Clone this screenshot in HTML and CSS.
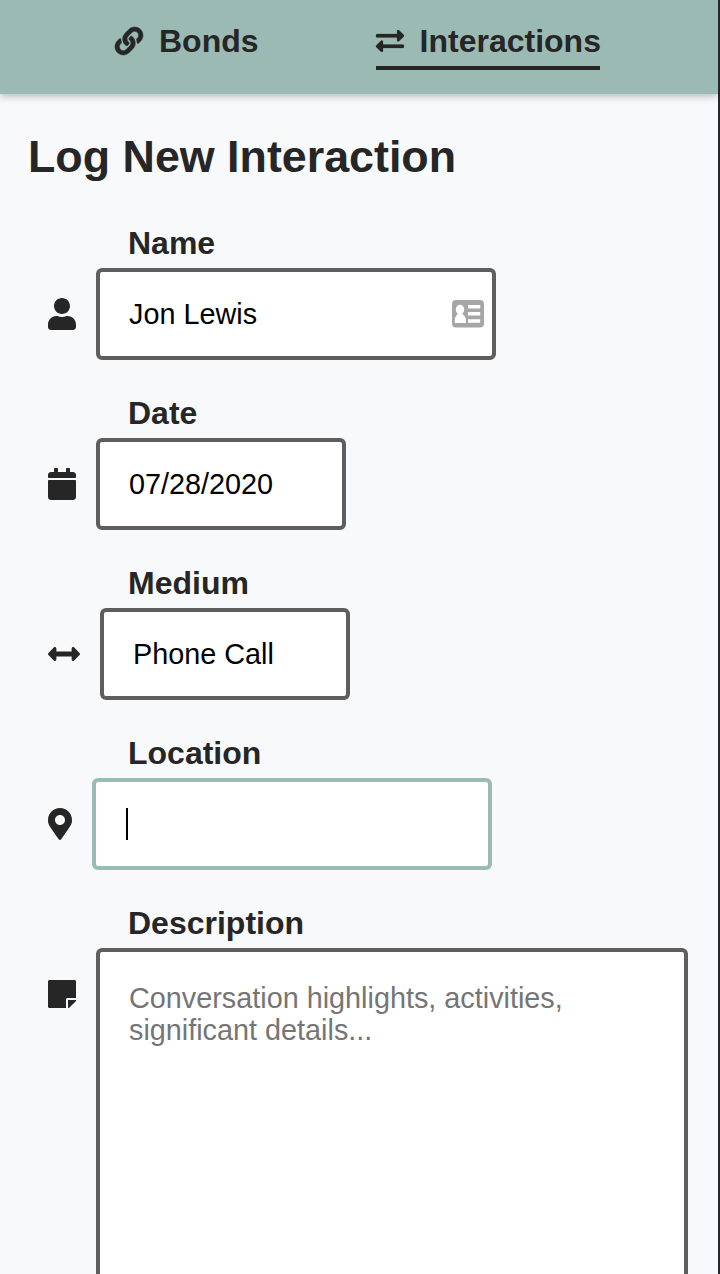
FILE: index.html
```html
<!DOCTYPE html>
<html lang="en">
<head>
<meta charset="utf-8">
<title>Log New Interaction</title>
<link rel="stylesheet" href="styles.css">
</head>
<body>
<div class="page">
  <nav class="nav">
    <a class="tab">
      <svg class="tab-icon" viewBox="0 0 512 512"><path d="M326.612 185.391c59.747 59.809 58.927 155.698.36 214.59-.11.12-.24.25-.36.37l-67.2 67.2c-59.27 59.27-155.699 59.262-214.96 0-59.27-59.26-59.27-155.7 0-214.96l37.106-37.106c9.84-9.84 26.786-3.3 27.294 10.606.648 17.722 3.826 35.527 9.69 52.721 1.986 5.822.567 12.262-3.783 16.612l-13.087 13.087c-28.026 28.026-28.905 73.66-1.155 101.96 28.024 28.579 74.086 28.749 102.325.51l67.2-67.19c28.191-28.191 28.073-73.757 0-101.83-3.701-3.694-7.429-6.564-10.341-8.569a16.037 16.037 0 0 1-6.947-12.606c-.396-10.567 3.348-21.456 11.698-29.806l21.054-21.055c5.521-5.521 14.182-6.199 20.584-1.731a152.482 152.482 0 0 1 20.522 17.197zM467.547 44.449c-59.261-59.262-155.69-59.27-214.96 0l-67.2 67.2c-.12.12-.25.25-.36.37-58.566 58.892-59.387 154.781.36 214.59a152.454 152.454 0 0 0 20.521 17.196c6.402 4.468 15.064 3.789 20.584-1.731l21.054-21.055c8.35-8.35 12.094-19.239 11.698-29.806a16.037 16.037 0 0 0-6.947-12.606c-2.912-2.005-6.64-4.875-10.341-8.569-28.073-28.073-28.191-73.639 0-101.83l67.2-67.19c28.239-28.239 74.3-28.069 102.325.51 27.75 28.3 26.872 73.934-1.155 101.96l-13.087 13.087c-4.35 4.35-5.769 10.79-3.783 16.612 5.864 17.194 9.042 34.999 9.69 52.721.509 13.906 17.454 20.446 27.294 10.606l37.106-37.106c59.271-59.259 59.271-155.699.001-214.959z"/></svg>
      <span>Bonds</span>
    </a>
    <a class="tab tab-active">
      <svg class="tab-icon tab-icon-thin" viewBox="0 0 512 512"><path d="M0 168v-16c0-13.255 10.745-24 24-24h360V80c0-21.367 25.899-32.042 40.971-16.971l80 80c9.372 9.373 9.372 24.569 0 33.941l-80 80C409.956 271.982 384 261.456 384 240v-48H24c-13.255 0-24-10.745-24-24zm488 152H128v-48c0-21.314-25.862-32.08-40.971-16.971l-80 80c-9.372 9.373-9.372 24.569 0 33.941l80 80C102.057 463.997 128 453.437 128 432v-48h360c13.255 0 24-10.745 24-24v-16c0-13.255-10.745-24-24-24z"/></svg>
      <span>Interactions</span>
    </a>
  </nav>
  <main class="content">
    <h1 class="title">Log New Interaction</h1>
    <div class="field">
      <div class="label">Name</div>
      <div class="row">
        <svg class="icon" viewBox="0 0 448 512"><path d="M224 256c70.7 0 128-57.3 128-128S294.7 0 224 0 96 57.3 96 128s57.3 128 128 128zm89.6 32h-16.7c-22.2 10.2-46.9 16-72.9 16s-50.6-5.8-72.9-16h-16.7C60.2 288 0 348.2 0 422.4V464c0 26.5 21.5 48 48 48h352c26.5 0 48-21.5 48-48v-41.6c0-74.2-60.2-134.4-134.4-134.4z"/></svg>
        <div class="box box-wide">
          <span class="value">Jon Lewis</span>
          <svg class="card-icon" viewBox="0 0 32 28"><rect width="32" height="27.500" rx="4" fill="#a6a6a6"/><g fill="#fff"><ellipse cx="8" cy="9.600" rx="4.200" ry="4.900"/><path d="M2.800 23v-2.500C2.800 16.500 5 14.500 6 13.500h4c1 1 4 3 4 7V23z"/><path d="M16 5h12.200v3.600H16zM16 12h12.200v3.600H16zM16 19.200h12.200v3.600H16z"/></g></svg>
        </div>
      </div>
    </div>
    <div class="field">
      <div class="label">Date</div>
      <div class="row">
        <svg class="icon" viewBox="0 0 448 512"><path d="M12 192h424c6.600 0 12 5.400 12 12v260c0 26.500-21.500 48-48 48H48c-26.500 0-48-21.500-48-48V204c0-6.600 5.400-12 12-12zm436-44v-36c0-26.500-21.500-48-48-48h-48V12c0-6.600-5.400-12-12-12h-40c-6.600 0-12 5.400-12 12v52H160V12c0-6.600-5.400-12-12-12h-40c-6.600 0-12 5.400-12 12v52H48C21.500 64 0 85.500 0 112v36c0 6.600 5.400 12 12 12h424c6.600 0 12-5.400 12-12z"/></svg>
        <div class="box"><span class="value">07/28/2020</span></div>
      </div>
    </div>
    <div class="field">
      <div class="label">Medium</div>
      <div class="row">
        <svg class="icon icon-square" viewBox="0 0 512 512"><path d="M377.941 169.941V216H134.059v-46.059c0-21.382-25.851-32.09-40.971-16.971L7.029 239.029c-9.373 9.373-9.373 24.568 0 33.941l86.059 86.059c15.119 15.119 40.971 4.411 40.971-16.971V296h243.882v46.059c0 21.382 25.851 32.09 40.971 16.971l86.059-86.059c9.373-9.373 9.373-24.568 0-33.941l-86.059-86.059c-15.119-15.12-40.971-4.412-40.971 16.970z"/></svg>
        <div class="box"><span class="value">Phone Call</span></div>
      </div>
    </div>
    <div class="field">
      <div class="label">Location</div>
      <div class="row">
        <svg class="icon icon-narrow" viewBox="0 0 384 512"><path d="M172.268 501.670C26.970 291.031 0 269.413 0 192 0 85.961 85.961 0 192 0s192 85.961 192 192c0 77.413-26.970 99.031-172.268 309.670-9.535 13.774-29.930 13.773-39.464 0zM192 272c44.183 0 80-35.817 80-80s-35.817-80-80-80-80 35.817-80 80 35.817 80 80 80z"/></svg>
        <div class="box box-wide box-focus"><span class="caret"></span></div>
      </div>
    </div>
    <div class="field">
      <div class="label">Description</div>
      <div class="row row-top">
        <svg class="icon icon-note" viewBox="0 0 448 512"><path d="M312 320h136V56c0-13.300-10.700-24-24-24H24C10.700 32 0 42.700 0 56v400c0 13.300 10.700 24 24 24h264V344c0-13.200 10.800-24 24-24zm129 55l-98 98c-4.500 4.500-10.600 7-17 7h-6V352h128v6.100c0 6.300-2.500 12.400-7 16.900z"/></svg>
        <div class="box box-area">Conversation highlights, activities, significant details...</div>
      </div>
    </div>
  </main>
</div>
</body>
</html>
```
FILE: styles.css
```css
* { box-sizing: border-box; }

body {
  margin: 0;
  background: #26262a;
  color: #262626;
  font-family: "Liberation Sans", Arial, sans-serif;
}

.page {
  width: 718px;
  height: 1274px;
  overflow: hidden;
  background: #f8f9fb;
}

.nav {
  display: flex;
  gap: 117px;
  height: 94px;
  padding: 20px 0 0 115px;
  background: #9abab3;
  box-shadow: 0 2px 8px rgba(0, 0, 0, 0.28);
}

.tab {
  display: flex;
  align-items: center;
  gap: 16px;
  height: 50px;
  padding-bottom: 4px;
  border-bottom: 4px solid transparent;
  font-size: 32px;
  line-height: 42px;
  font-weight: bold;
}

.tab-active {
  width: 224px;
  white-space: nowrap;
  border-bottom-color: #262626;
}

.tab-icon {
  flex: none;
  width: 28px;
  height: 28px;
  overflow: visible;
  fill: #262626;
  stroke: #262626;
  stroke-width: 9px;
}

.tab-icon-thin { stroke-width: 4px; }

.content { padding: 36px 0 0 28px; }

.title {
  margin: 0 0 42px;
  font-size: 44.8px;
  line-height: 52px;
}

.field {
  height: 170px;
  padding-left: 20px;
}

.label {
  height: 44px;
  padding-left: 80px;
  font-size: 32px;
  line-height: 38px;
  font-weight: bold;
}

.row {
  display: flex;
  align-items: center;
  gap: 20px;
}

.row-top { align-items: flex-start; }

.icon {
  flex: none;
  width: 28px;
  height: 32px;
  fill: #262626;
}

.icon-square { width: 32px; }
.icon-narrow { width: 24px; }
.icon-note { margin-top: 30px; }

.box {
  display: flex;
  align-items: center;
  justify-content: space-between;
  width: 250px;
  height: 92px;
  padding: 0 8px 0 29px;
  border: 4px solid #5e5e5e;
  border-radius: 6px;
  background: #fff;
  color: #000;
  font-size: 28.8px;
  line-height: 32px;
}

.box-wide { width: 400px; }
.box-focus { border-color: #9abab3; }

.box-area {
  display: block;
  width: 592px;
  height: 400px;
  padding: 30px 100px 0 29px;
  color: #757575;
}

.card-icon {
  width: 32px;
  height: 28px;
}

.caret {
  width: 2px;
  height: 32px;
  margin-left: 1px;
  background: #000;
}
```
